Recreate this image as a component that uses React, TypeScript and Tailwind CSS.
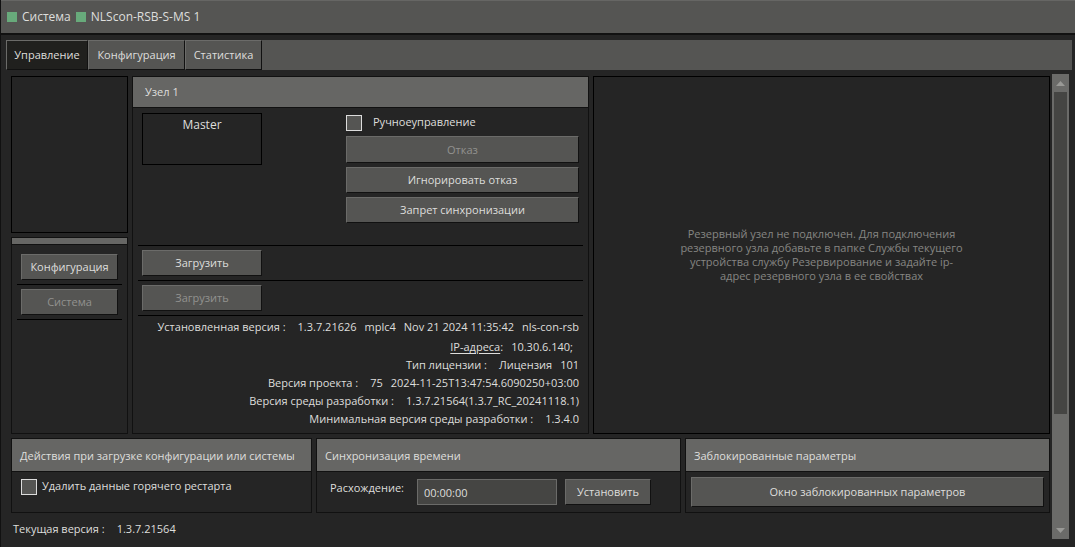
import type { ReactNode } from "react";
import { clsx } from "clsx";

const bevel = "border border-t-[#6b6b69] border-l-[#6b6b69] border-r-[#111111] border-b-[#111111]";

const tabs = [
  { label: "Управление", width: "w-[82px]" },
  { label: "Конфигурация", width: "w-[97px]" },
  { label: "Статистика", width: "w-[77px]" },
];

const versions = [
  { label: "Тип лицензии :", values: ["Лицензия", "101"] },
  { label: "Версия проекта :", values: ["75", "2024-11-25T13:47:54.6090250+03:00"] },
  { label: "Версия среды разработки :", values: ["1.3.7.21564(1.3.7_RC_20241118.1)"] },
  { label: "Минимальная версия среды разработки :", values: ["1.3.4.0"] },
];

function Button({ children, className, disabled }: { children: ReactNode; className?: string; disabled?: boolean }) {
  return (
    <button
      type="button"
      disabled={disabled}
      className={clsx(bevel, "flex items-center justify-center whitespace-nowrap bg-[#555553] disabled:text-[#92928f]", className)}
    >
      {children}
    </button>
  );
}

function Checkbox({ label, className }: { label: string; className?: string }) {
  return (
    <label className={clsx("flex items-center", className)}>
      <input type="checkbox" className="size-4 shrink-0 appearance-none border border-[#dcdcdc] bg-[#555553] checked:bg-[#68aa7b]" />
      <span className="-mt-0.5">{label}</span>
    </label>
  );
}

function Panel({ title, children, className }: { title: string; children: ReactNode; className?: string }) {
  return (
    <section className={clsx("flex min-w-0 flex-col border border-[#111111]", className)}>
      <h2 className="flex h-[33px] shrink-0 items-center border-b border-[#111111] bg-[#666664] px-2 pt-0.5">{title}</h2>
      {children}
    </section>
  );
}

function VersionRow({ label, values }: { label: string; values: string[] }) {
  return (
    <div className="flex h-[18px] items-center justify-end gap-2 whitespace-nowrap">
      <span className="mr-1">{label}</span>
      {values.map((v) => <span key={v}>{v}</span>)}
    </div>
  );
}

function Scrollbar() {
  return (
    <div className="flex w-[17px] shrink-0 flex-col items-center bg-[#6b6b69]">
      <svg viewBox="0 0 17 18" className="h-[18px] w-[17px] shrink-0"><path d="M4 12 8.5 7 13 12Z" fill="#999996" /></svg>
      <div className="w-full flex-1 px-0.5">
        <div className="h-[75%] bg-[#454543]" />
      </div>
      <svg viewBox="0 0 17 18" className="h-[18px] w-[17px] shrink-0"><path d="M4 7 8.5 12 13 7Z" fill="#999996" /></svg>
    </div>
  );
}

function NodePanel() {
  return (
    <section className="flex min-w-0 flex-1 flex-col border border-[#111111]">
      <h2 className="flex h-[31px] shrink-0 items-center border-b border-[#111111] bg-[#666664] px-3">Узел 1</h2>
      <div className="flex h-[137px] items-start justify-between px-[9px] pt-[5px]">
        <div className="h-[52px] w-[120px] border border-black pt-[3px] text-center text-[12px]">Master</div>
        <div className="flex w-[233px] flex-col gap-1">
          <Checkbox label="Ручноеуправление" className="mt-0.5 gap-[11px]" />
          <Button disabled className="mt-px h-[27px]">Отказ</Button>
          <Button className="h-[26px]">Игнорировать отказ</Button>
          <Button className="h-[26px]">Запрет синхронизации</Button>
        </div>
      </div>
      <div className="mx-[5px] border-y border-black px-1 py-1">
        <Button className="h-[26px] w-[120px]">Загрузить</Button>
      </div>
      <div className="mx-[5px] border-b border-black px-1 py-1">
        <Button disabled className="h-[26px] w-[120px]">Загрузить</Button>
      </div>
      <div className="px-[9px] pt-0.5 pb-[5px]">
        <VersionRow label="Установленная версия :" values={["1.3.7.21626", "mplc4", "Nov 21 2024 11:35:42", "nls-con-rsb"]} />
        <div className="mt-0.5 flex h-[18px] items-center justify-end gap-2 pr-1.5">
          <span><a href="#ip" className="underline underline-offset-2">IP-адреса</a>:</span>
          <span>10.30.6.140;</span>
        </div>
        {versions.map((row) => <VersionRow key={row.label} {...row} />)}
      </div>
    </section>
  );
}

export default function App() {
  return (
    <div className="flex min-h-screen flex-col border-l border-[#111111] bg-[#252525] font-['Open_Sans','Noto_Sans',sans-serif] text-[11px] leading-4 text-[#dededc]">
      <header className="flex h-[35px] shrink-0 items-center gap-[5px] border-t border-b-2 border-t-[#666664] border-b-[#111111] bg-[#555553] px-1.5 text-[12px]">
        <span className="size-2.5 bg-[#68aa7b]" />
        <span>Система</span>
        <span className="size-2.5 bg-[#68aa7b]" />
        <span>NLScon-RSB-S-MS 1</span>
      </header>

      <nav className="mt-[5px] mr-[3px] ml-[5px] flex h-[30px] shrink-0 bg-[#555553]">
        {tabs.map((tab, i) => (
          <button key={tab.label} type="button" className={clsx(bevel, tab.width, i === 0 ? "bg-[#20201e]" : "bg-[#555553]")}>
            {tab.label}
          </button>
        ))}
      </nav>

      <main className="mt-1 mr-1.5 mb-2 ml-2.5 flex flex-1 gap-0.5">
        <div className="min-w-0 flex-1 pt-0.5">
          <div className="flex gap-1">
            <div className="flex w-[117px] shrink-0 flex-col gap-1">
              <div className="flex-1 border border-black" />
              <div className="h-[197px] border border-[#111111]">
                <div className="h-[7px] border-b border-[#111111] bg-[#666664]" />
                <div className="mx-[5px] mt-2 border-b border-black px-1 pt-px pb-1">
                  <Button className="h-[26px] w-full">Конфигурация</Button>
                </div>
                <div className="mx-[5px] border-b border-black px-1 py-1">
                  <Button disabled className="h-[26px] w-full">Система</Button>
                </div>
              </div>
            </div>
            <NodePanel />
            <section className="flex min-w-0 flex-1 items-center justify-center border border-black">
              <p className="w-[290px] text-center leading-[14px] text-[#858583]">
                Резервный узел не подключен. Для подключения резервного узла добавьте в папке Службы текущего устройства службу Резервирование и задайте ip-адрес резервного узла в ее свойствах
              </p>
            </section>
          </div>

          <div className="mt-1 flex gap-1">
            <Panel title="Действия при загрузке конфигурации или системы" className="w-[301px] shrink-0 whitespace-nowrap">
              <Checkbox label="Удалить данные горячего рестарта" className="mt-[7px] ml-[9px] gap-[5px]" />
            </Panel>
            <Panel title="Синхронизация времени" className="flex-1">
              <div className="flex items-start pt-[7px] pr-[29px] pb-[7px] pl-[13px]">
                <label htmlFor="drift" className="mt-px w-[87px]">Расхождение:</label>
                <input id="drift" type="text" defaultValue="00:00:00" className="h-[26px] min-w-0 flex-1 border border-[#6b6b69] bg-[#454543] px-1.5" />
                <Button className="ml-2 h-[26px] w-[86px]">Установить</Button>
              </div>
            </Panel>
            <Panel title="Заблокированные параметры" className="flex-1">
              <div className="p-[5px]">
                <Button className="h-[30px] w-full">Окно заблокированных параметров</Button>
              </div>
            </Panel>
          </div>

          <div className="mt-2 flex gap-3 pl-0.5">
            <span>Текущая версия :</span>
            <span>1.3.7.21564</span>
          </div>
        </div>
        <Scrollbar />
      </main>
    </div>
  );
}
